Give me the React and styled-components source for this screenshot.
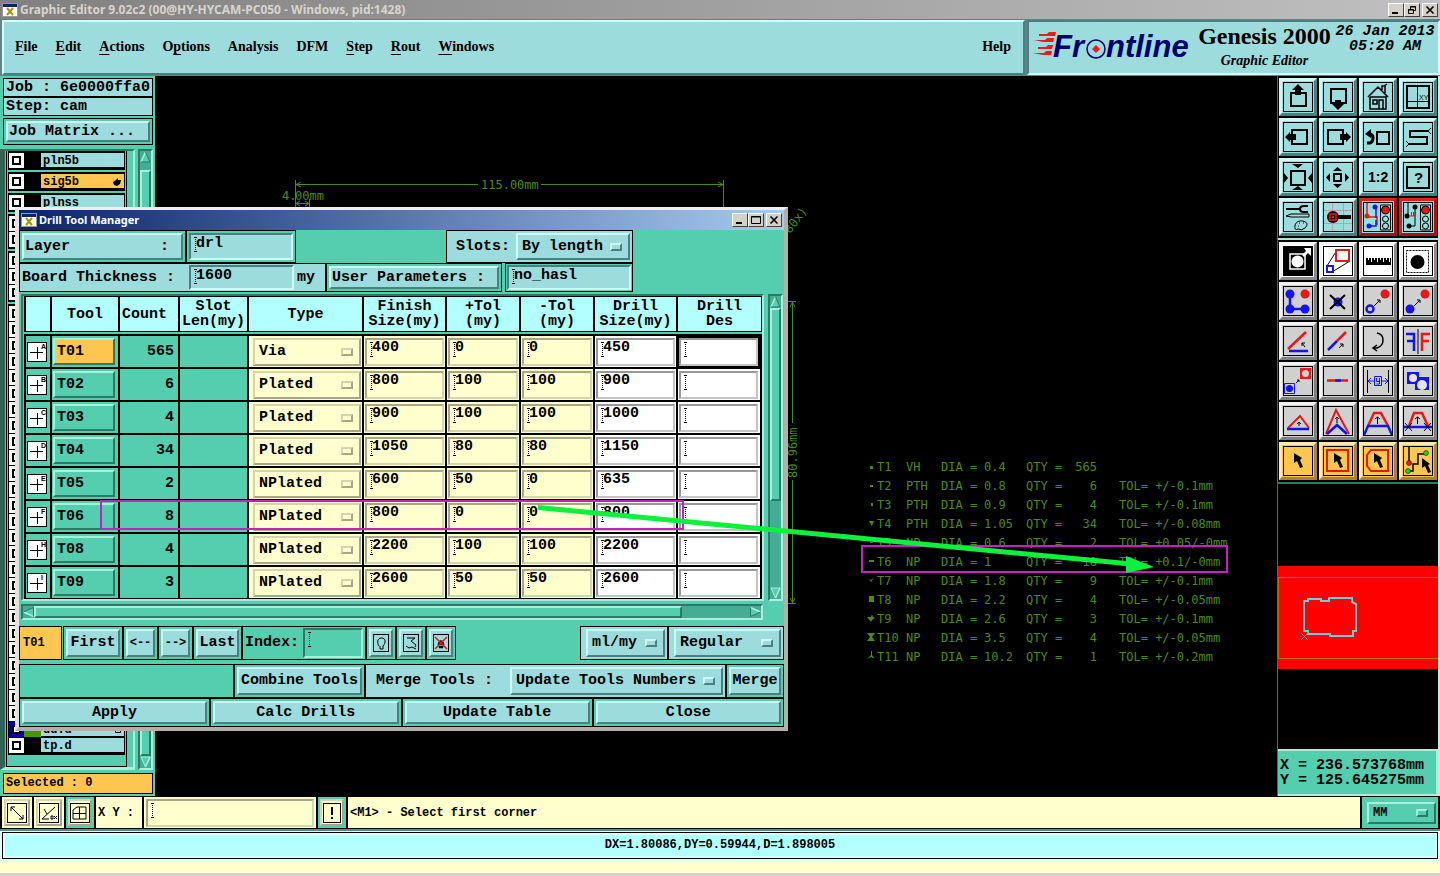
import React from "react";
import styled, { createGlobalStyle, css } from "styled-components";

const c = {
  teal: "#55ceb0",
  tealLight: "#a9f0dc",
  tealDark: "#2b7a66",
  trough: "#45ad93",
  aqua: "#9cdcdc",
  aquaLight: "#cdf8f6",
  aquaDark: "#4c8080",
  ice: "#b3ffff",
  cream: "#ffffce",
  orange: "#ffc64f",
  green: "#4a8a1c",
  magenta: "#c71fc4",
};

const mono = '"Liberation Mono", monospace';
const serif = '"Liberation Serif", serif';

const Global = createGlobalStyle`
  *, *::before, *::after { box-sizing: border-box; }
  body { margin: 0; background: ${c.cream}; color: #000; }
  button, input, select { margin: 0; border-radius: 0; color: inherit; outline: none; }
  h1, h2, p { margin: 0; }
`;

const raised = (light, dark, width = 2) => css`
  border: ${width}px solid;
  border-color: ${light} ${dark} ${dark} ${light};
`;

const Page = styled.div`
  min-height: 100vh;
  display: flex;
  flex-direction: column;
  font: bold 15px/18px ${mono};
`;

/* ---------- window title bars ---------- */

const TitleBar = styled.header`
  display: flex;
  align-items: center;
  gap: 2px;
  height: ${(p) => (p.$active ? 20 : 19)}px;
  padding: 0 2px;
  color: ${(p) => (p.$active ? "#fff" : "#d8d4cc")};
  background: ${(p) =>
    p.$active
      ? "linear-gradient(90deg, #0a246a, #a6caf0)"
      : "linear-gradient(90deg, #808080, #c0c0c0)"};
`;

const Title = styled.h1`
  flex: 1;
  font: bold ${(p) => p.$size || 12}px/16px "Noto Sans", sans-serif;
  white-space: nowrap;
`;

const WindowButtons = styled.div`
  display: flex;
`;

const WindowButton = styled.button`
  display: grid;
  place-items: center;
  width: 16px;
  height: 14px;
  padding: 0;
  background: #d4d0c8;
  color: #000;
  ${raised("#fff", "#404040", 1)}
  &:last-child { margin-left: 2px; }
`;

const AppIcon = () => (
  <svg width="16" height="14" aria-hidden="true">
    <rect x="0.5" y="0.5" width="15" height="13" fill="#fff" stroke="#9a9a9a" />
    <rect x="1" y="1" width="14" height="3" fill="#0a246a" />
    <path d="M5 5l6 7M11 5l-6 7" stroke="#a89400" strokeWidth="2" />
  </svg>
);

const WindowControls = ({ restore }) => (
  <WindowButtons>
    <WindowButton aria-label="Minimize">
      <svg width="10" height="10"><path d="M1 8h6" stroke="#000" strokeWidth="2" /></svg>
    </WindowButton>
    <WindowButton aria-label={restore ? "Restore" : "Maximize"}>
      <svg width="10" height="10" fill="none" stroke="#000">
        {restore ? (
          <path d="M3.5 4V1.5h5v4H7M3 2h6M1.5 4.5h5v4h-5zM1 5h6" />
        ) : (
          <path d="M0.5 1.5h9v7h-9zM0 2h10" />
        )}
      </svg>
    </WindowButton>
    <WindowButton aria-label="Close window">
      <svg width="10" height="10"><path d="M1.5 1.5l7 7M8.5 1.5l-7 7" stroke="#000" strokeWidth="1.6" /></svg>
    </WindowButton>
  </WindowButtons>
);

/* ---------- top menu and brand ---------- */

const TopRow = styled.div`
  display: flex;
  height: 57px;
  gap: 2px;
  padding: 1px 0 1px 2px;
  background: #5d8583;
`;

const MenuBar = styled.nav`
  flex: 1;
  display: flex;
  align-items: center;
  gap: 18px;
  padding: 0 12px 2px 11px;
  background: ${c.aqua};
  ${raised("#d8fffb", c.aquaDark)}
`;

const MenuItem = styled.button`
  padding: 0;
  border: 0;
  background: none;
  font: bold 14px/18px ${serif};
  &:last-child { margin-left: auto; }
  u { text-underline-offset: 3px; }
`;

const Brand = styled.div`
  display: flex;
  width: 413px;
  padding: 0 2px;
  background: ${c.aqua};
  ${raised(c.aquaDark, "#d8fffb")}
`;

const Product = styled.div`
  flex: 1;
  text-align: center;
  font: bold 24px/28px ${serif};
  white-space: nowrap;
  em { display: block; font-size: 14px; line-height: 22px; }
`;

const Clock = styled.time`
  width: 102px;
  padding-top: 2px;
  text-align: center;
  font-style: italic;
  font-size: 15px;
  line-height: 15px;
  white-space: nowrap;
`;

const FrontlineLogo = () => (
  <svg width="164" height="48" aria-label="Frontline" role="img">
    <g fill="#f01818">
      <path d="M8 12h8l2-2h7l-1 4H8zM3 18h11l2-2h7l-1 4H12zM7 25h8l2-2h5l-1 4H7zM2 31h11l2-2h6l-1 4H12z" />
    </g>
    <g fill="#00006e" fontFamily='"Liberation Sans", sans-serif' fontSize="31" fontWeight="bold" fontStyle="italic">
      <text x="22" y="35">Fr</text>
      <text x="75" y="35">ntline</text>
    </g>
    <circle cx="65" cy="27" r="9" fill="none" stroke="#00006e" strokeWidth="1.5" />
    <path d="M65 23l4 4-4 4-4-4z" fill="#f01818" />
  </svg>
);

/* ---------- work area ---------- */

const Work = styled.main`
  position: relative;
  display: flex;
  background: #000;
`;

const Sidebar = styled.aside`
  display: flex;
  flex-direction: column;
  width: 155px;
  padding: 2px 2px 2px 3px;
  background: ${c.teal};
  white-space: pre;
`;

const InfoLine = styled.p`
  height: 19px;
  padding: 0 2px;
  line-height: 17px;
  border: 1px solid #000;
  background: ${c.aqua};
`;

const SelectedLine = styled(InfoLine)`
  height: 21px;
  margin-top: 3px;
  font-size: 12px;
  line-height: 19px;
  background: ${c.orange};
`;

const LayerArea = styled.div`
  display: flex;
  justify-content: space-between;
  margin: 4px 0 0 -3px;
`;

const LayerFrame = styled.div`
  width: 135px;
  padding-left: 1px;
  border-top: 2px solid ${c.tealDark};
  border-bottom: 3px solid ${c.tealLight};
  border-left: 5px solid #2e6456;
  border-right: 2px solid ${c.tealLight};
`;

const LayerList = styled.div`
  width: 121px;
  padding: 0 1px 9px 1px;
  border: solid #000;
  border-width: 0 1px 1px 1px;
`;

const LayerGroup = styled.div`
  margin-bottom: 2px;
  border: solid #000;
  border-width: 2px 1px 1px 1px;
  background: #000;
`;

const LayerRow = styled.label`
  display: grid;
  grid-template-columns: 15px 17px 1fr;
  height: 16px;
  font-size: 12px;
  line-height: 14px;
`;

const LayerCheck = styled.input`
  appearance: none;
  width: 15px;
  height: 15px;
  border: 3px solid ${(p) => (p.$active ? "#0000a8" : "#fff")};
  background: #fff;
  box-shadow: inset 0 0 0 2px #000;
`;

const Swatch = styled.span`
  height: 15px;
  background: ${(p) => p.$color};
`;

const LayerName = styled.span`
  display: flex;
  justify-content: space-between;
  align-items: center;
  height: 14px;
  padding: 1px 3px 0 2px;
  background: ${(p) => (p.$active ? c.orange : c.aqua)};
`;

const Track = styled.div`
  display: flex;
  flex-direction: ${(p) => (p.$horizontal ? "row" : "column")};
  width: ${(p) => (p.$horizontal ? "742px" : "15px")};
  height: ${(p) => (p.$horizontal ? "16px" : "auto")};
  background: ${c.trough};
  ${raised(c.tealDark, c.tealLight)}
`;

const Thumb = styled.div`
  flex: ${(p) => p.$size};
  background: ${c.teal};
  ${raised(c.tealLight, c.tealDark)}
`;

const Gap = styled.div`
  flex: ${(p) => p.$size};
`;

const Arrow = ({ dir }) => {
  const turn = { up: 0, right: 90, down: 180, left: 270 }[dir];
  return (
    <svg width="11" height="12" viewBox="0 0 11 12" style={{ flex: "none" }} aria-hidden="true">
      <g transform={`rotate(${turn} 5.5 6)`}>
        <path d="M5.5 1L1 11H10z" fill={c.teal} />
        <path d="M5.5 1L1 11" stroke={c.tealLight} strokeWidth="1.5" />
        <path d="M5.5 1L10 11H1" stroke={dir === "down" ? c.tealLight : c.tealDark} fill="none" />
      </g>
    </svg>
  );
};

/* ---------- generic Motif controls ---------- */

const Box = styled.div`
  display: flex;
  align-items: stretch;
  flex: ${(p) => (p.$grow ? "1 1 0" : "none")};
  width: ${(p) => (p.$w ? `${p.$w}px` : "auto")};
  margin-left: ${(p) => p.$ml || 0}px;
  padding: ${(p) => p.$pad ?? 2}px;
  border: 1px solid #000;
  background: ${(p) => p.$bg || c.teal};
`;

const Button = styled.button`
  flex: 1;
  display: flex;
  align-items: center;
  justify-content: ${(p) => p.$justify || "center"};
  padding: 0 ${(p) => p.$px ?? 0}px;
  background: ${c.aqua};
  ${raised(c.aquaLight, c.aquaDark)}
  font: bold ${(p) => p.$size || 15}px/18px ${mono};
  white-space: pre;
`;

const dots = css`
  background-image: repeating-linear-gradient(#000 0 1px, transparent 1px 2px),
    linear-gradient(#000, #000), linear-gradient(#000, #000);
  background-size: 1px 15px, 3px 1px, 3px 1px;
  background-position: 4px 2px, 3px 2px, 3px 16px;
  background-repeat: no-repeat;
`;

const Field = styled.input`
  display: block;
  flex: ${(p) => (p.$w ? "none" : 1)};
  width: ${(p) => (p.$w ? `${p.$w}px` : "100%")};
  min-width: 0;
  padding: 0 0 ${(p) => p.$pb ?? 8}px 5px;
  background-color: ${(p) => p.$bg || c.aqua};
  ${(p) => raised(p.$dark || c.aquaDark, p.$light || c.aquaLight)}
  font: bold 15px/16px ${mono};
  ${dots}
`;

const SelectWrap = styled.span`
  position: relative;
  display: flex;
  flex: ${(p) => (p.$w ? "none" : 1)};
  width: ${(p) => (p.$w ? `${p.$w}px` : "auto")};
  margin-left: ${(p) => p.$ml || 0}px;
  &::after {
    content: "";
    position: absolute;
    right: 8px;
    top: 50%;
    width: 12px;
    height: 8px;
    margin-top: -4px;
    pointer-events: none;
    ${(p) => raised(p.$light || c.aquaLight, p.$dark || c.aquaDark)}
  }
`;

const SelectBox = styled.select`
  appearance: none;
  width: 100%;
  padding: 0 0 0 4px;
  background: ${(p) => p.$bg || c.aqua};
  ${(p) => raised(p.$light || c.aquaLight, p.$dark || c.aquaDark)}
  font: bold ${(p) => p.$size || 15}px/18px ${mono};
`;

const Select = ({ label, value, w, ml, light, dark, bg, size, id }) => (
  <SelectWrap $w={w} $ml={ml} $light={light} $dark={dark}>
    <SelectBox id={id} aria-label={label} defaultValue={value} $light={light} $dark={dark} $bg={bg} $size={size}>
      <option>{value}</option>
    </SelectBox>
  </SelectWrap>
);

const Label = styled.label`
  display: flex;
  align-items: center;
  width: ${(p) => (p.$w ? `${p.$w}px` : "auto")};
  padding-left: ${(p) => p.$pl ?? 1}px;
  white-space: pre;
`;

/* ---------- drill dialog ---------- */

const Dialog = styled.section`
  position: absolute;
  left: 15px;
  top: 131px;
  width: 773px;
  border: solid;
  border-width: 3px 4px 4px 4px;
  border-color: #f0eee8 #b4b0a8 #b4b0a8 #e4e2dc;
  background: ${c.teal};
`;

const Line = styled.div`
  display: flex;
  height: ${(p) => p.$h}px;
  margin-top: ${(p) => p.$mt || 0}px;
`;

const TableLine = styled.div`
  display: flex;
  gap: 4px;
  margin: 2px 0 3px 2px;
`;

const TableFrame = styled.div`
  flex: none;
  padding-left: 1px;
  ${raised(c.tealDark, c.tealLight)}
`;

const Table = styled.table`
  width: 738px;
  table-layout: fixed;
  border-spacing: 0;
  tbody::before { content: ""; display: block; height: 2px; }
`;

const Th = styled.th`
  height: 36px;
  padding: 0;
  border: solid #000;
  border-width: 1px 0 1px 2px;
  background: ${c.ice};
  font: bold 15px/15px ${mono};
  white-space: pre;
  &:last-child { border-right-width: 1px; }
`;

const Td = styled.td`
  height: 33px;
  padding: ${(p) => p.$pad || "1px"};
  border: solid #000;
  border-width: 2px 0 0 2px;
  background: ${(p) => p.$bg || c.teal};
  text-align: right;
  tr:last-child > & { height: 34px; border-bottom-width: 1px; }
  &:last-child { border-right-width: 2px; box-shadow: ${(p) => (p.$focus ? "inset 0 0 0 2px #000" : "none")}; }
  & > ${Field} { height: 28px; }
  & > ${SelectWrap} { height: 28px; }
`;

const ToolButton = styled.button`
  display: block;
  width: 100%;
  height: 27px;
  padding: 0 0 0 2px;
  text-align: left;
  background: ${(p) => (p.$current ? c.orange : c.teal)};
  ${raised(c.tealLight, c.tealDark)}
  font: bold 15px/18px ${mono};
`;

const CurrentTool = styled.div`
  display: flex;
  align-items: center;
  width: 43px;
  padding-left: 3px;
  border: 1px solid #000;
  background: ${c.orange};
  font-size: 12px;
`;

const Spacer = styled.div`
  flex: 1;
  border: ${(p) => (p.$framed ? "1px solid #000" : 0)};
`;

const MarkSvg = styled.svg`
  display: block;
`;

const ToolMark = ({ letter }) => (
  <MarkSvg width="20" height="20" aria-hidden="true">
    <rect x="0.5" y="0.5" width="19" height="19" fill="#fff" stroke="#000" />
    <path d="M3 10.5H16M10.5 5V17" stroke="#000" />
    <text x="14" y="7" fontSize="7" fontWeight="bold" fontFamily="Liberation Sans, sans-serif">{letter}</text>
  </MarkSvg>
);

const columns = [
  ["", 26], ["Tool", 68], ["Count ", 60], ["Slot\nLen(my)", 69], ["Type", 115],
  ["Finish\nSize(my)", 83], ["+Tol\n(my)", 74], ["-Tol\n(my)", 74], ["Drill\nSize(my)", 83], ["Drill\nDes", 86],
];

const tools = [
  ["A", "T01", 565, "Via", 400, 0, 0, 450],
  ["B", "T02", 6, "Plated", 800, 100, 100, 900],
  ["C", "T03", 4, "Plated", 900, 100, 100, 1000],
  ["D", "T04", 34, "Plated", 1050, 80, 80, 1150],
  ["E", "T05", 2, "NPlated", 600, 50, 0, 635],
  ["F", "T06", 8, "NPlated", 800, 0, 0, 800],
  ["H", "T08", 4, "NPlated", 2200, 100, 100, 2200],
  ["I", "T09", 3, "NPlated", 2600, 50, 50, 2600],
];

const creamBevel = { light: "#d6d4ae", dark: "#a8a688" };
const whiteBevel = { light: "#c4c4c4", dark: "#989898" };

const SmallIcon = styled.svg`
  width: 16px;
  height: 18px;
  border: 1px solid #000;
  fill: none;
  stroke: #000;
`;

const DrillDialog = () => (
  <Dialog aria-label="Drill Tool Manager">
    <TitleBar $active>
      <AppIcon />
      <Title as="h2" $size={11}>Drill Tool Manager</Title>
      <WindowControls />
    </TitleBar>

    <Line $h={33}>
      <Box $w={167}><Button $justify="flex-start" $px={1}>{"Layer          :"}</Button></Box>
      <Box $w={110}><Field aria-label="Layer" defaultValue="drl" $pb={6} /></Box>
      <Box $w={187} $ml={150} $bg={c.aqua}>
        <Label htmlFor="slots" $pl={7}>Slots:</Label>
        <Select id="slots" value="By length" ml={6} />
      </Box>
    </Line>
    <Line $h={29}>
      <Box $w={307} $bg={c.aqua} $pad={1}>
        <Label htmlFor="thickness" $w={168}>Board Thickness :</Label>
        <Field id="thickness" defaultValue="1600" $w={105} $pb={4} />
        <Label as="span" $pl={3}>my</Label>
      </Box>
      <Box $w={176}><Button $justify="flex-start" $px={1}>User Parameters :</Button></Box>
      <Box $w={128} $ml={3} $pad={1}><Field aria-label="User parameters" defaultValue="no_hasl" $pb={4} /></Box>
    </Line>

    <TableLine>
      <TableFrame>
        <Table>
          <colgroup>{columns.map(([name, w]) => <col key={name} width={w} />)}</colgroup>
          <thead>
            <tr>{columns.map(([name]) => <Th key={name} scope="col">{name}</Th>)}</tr>
          </thead>
          <tbody>
            {tools.map(([letter, name, count, type, finish, plus, minus, drill], i) => (
              <tr key={name}>
                <Td><ToolMark letter={letter} /></Td>
                <Td $pad="1px 3px 1px 1px"><ToolButton $current={i === 0}>{name}</ToolButton></Td>
                <Td $pad="1px 4px 1px 1px">{count}</Td>
                <Td />
                <Td $bg={c.cream} $pad="1px 1px 1px 4px">
                  <Select label={`${name} type`} value={type} bg={c.cream} light={creamBevel.light} dark={creamBevel.dark} />
                </Td>
                {[["finish size", finish], ["plus tolerance", plus], ["minus tolerance", minus]].map(([what, v]) => (
                  <Td key={what} $bg={c.cream}>
                    <Field aria-label={`${name} ${what}`} defaultValue={v} $bg={c.cream} $dark={creamBevel.dark} $light={creamBevel.light} />
                  </Td>
                ))}
                <Td $bg="#fff">
                  <Field aria-label={`${name} drill size`} defaultValue={drill} $bg="#fff" $dark={whiteBevel.dark} $light={whiteBevel.light} />
                </Td>
                <Td $bg="#fff" $focus={i === 0} $pad="1px 2px 1px 1px">
                  <Field aria-label={`${name} description`} $bg="#fff" $dark={whiteBevel.dark} $light={whiteBevel.light} />
                </Td>
              </tr>
            ))}
          </tbody>
        </Table>
      </TableFrame>
      <Track aria-hidden="true">
        <Arrow dir="up" /><Thumb $size={188} /><Gap $size={86} /><Arrow dir="down" />
      </Track>
    </TableLine>
    <TableLine>
      <Track $horizontal aria-hidden="true">
        <Arrow dir="left" /><Thumb $size={646} /><Gap $size={68} /><Arrow dir="right" />
      </Track>
    </TableLine>

    <Line $h={34} $mt={6}>
      <CurrentTool>T01</CurrentTool>
      <Box $w={60} $ml={1}><Button>First</Button></Box>
      <Box $w={35}><Button $size={12}>{"<--"}</Button></Box>
      <Box $w={35}><Button $size={12}>{"-->"}</Button></Box>
      <Box $w={49}><Button>Last</Button></Box>
      <Box $w={124} $pad={1}>
        <Label htmlFor="index" $w={59}>Index:</Label>
        <Field id="index" $bg={c.teal} $dark={c.tealDark} $light={c.tealLight} $w={60} />
      </Box>
      <Box $w={30}>
        <Button aria-label="Highlight">
          <SmallIcon><path d="M5 11C3 8 3 3 7.500 3S12 8 9 11V14H6V11" /></SmallIcon>
        </Button>
      </Box>
      <Box $w={30}>
        <Button aria-label="Show path">
          <SmallIcon><path d="M3 3H11L7 6L12 10L11 12M2 11L5 13L8 12L12 14" /></SmallIcon>
        </Button>
      </Box>
      <Box $w={30}>
        <Button aria-label="Clear highlight">
          <SmallIcon>
            <path d="M4 10C4 4 10 4 10 10M5 11h4v2h-4z" fill="#111" strokeWidth=".5" />
            <path d="M1 2L13 14M13 2L1 14" stroke="#e01818" strokeWidth="1.5" />
          </SmallIcon>
        </Button>
      </Box>
      <Spacer />
      <Box $w={88} $bg={c.aqua}><Select label="Units" value="ml/my" ml={3} /></Box>
      <Box $w={116} $bg={c.aqua}><Select label="Mode" value="Regular" ml={3} /></Box>
    </Line>
    <Line $h={34} $mt={4}>
      <Spacer $framed />
      <Box $w={131}><Button>Combine Tools</Button></Box>
      <Box $w={361} $bg={c.aqua}>
        <Label htmlFor="merge" $w={142} $pl={8}>Merge Tools :</Label>
        <Select id="merge" value="Update Tools Numbers" />
      </Box>
      <Box $w={58}><Button>Merge</Button></Box>
    </Line>
    <Line $h={29}>
      {["Apply", "Calc Drills", "Update Table", "Close"].map((t) => (
        <Box key={t} $grow><Button>{t}</Button></Box>
      ))}
    </Line>
  </Dialog>
);

/* ---------- CAD canvas ---------- */

const Canvas = styled.svg`
  flex: 1;
  min-width: 0;
  background: #000;
  font: normal 12px "DejaVu Sans Mono", monospace;
`;

const holes = [
  ["T1", "VH", "0.4", 565, "", "M870 466h3v3h-3z"],
  ["T2", "PTH", "0.8", 6, "+/-0.1mm", "M870 485h3v2h-3z"],
  ["T3", "PTH", "0.9", 4, "+/-0.1mm", "M871 503h2v3h-2z"],
  ["T4", "PTH", "1.05", 34, "+/-0.08mm", "M869 521h5l-2 5z"],
  ["T5", "NP", "0.6", 2, "+0.05/-0mm", "M870 542h3v1h-3z"],
  ["T6", "NP", "1", 18, "+0.1/-0mm", "M869 560h5v2h-5z"],
  ["T7", "NP", "1.8", 9, "+/-0.1mm", "M869 579l2 1 3-2-3 4z"],
  ["T8", "NP", "2.2", 4, "+/-0.05mm", "M869 596h5v6h-5z"],
  ["T9", "NP", "2.6", 3, "+/-0.1mm", "M867 617h4l1-3 1 3 2 1-3 2-1 2z"],
  ["T10", "NP", "3.5", 4, "+/-0.05mm", "M867 633h8l-3 4 3 4h-8l3-4z"],
  ["T11", "NP", "10.2", 1, "+/-0.2mm", "M871 651h1v4l3 4-4-2-4 2 4-4z"],
];

const CadCanvas = () => (
  <Canvas aria-label="Drawing">
    <g transform="translate(-155 -76)" fill={c.green}>
      <g stroke={c.green} fill="none">
        <path d="M295.500 180V208M723.500 180V208M296 184.500H478M541 184.500H723M296 203.500H309M309.500 199V208" />
        <path d="M301 182l-5 2.500 5 2.500M718 182l5 2.500-5 2.500M300 201l-4 2.500 4 2.500M305 201l4 2.500-4 2.500" />
        <path d="M792.500 302V423M792.500 480V603M788 301.500H796M788 603.500H796M790 307l2.500-5 2.500 5M790 598l2.500 5 2.500-5" />
      </g>
      <text x="481" y="189">115.00mm</text>
      <text x="282" y="200">4.</text>
      <text x="295" y="200">00mm</text>
      <text transform="translate(797 478) rotate(-90)">80.96mm</text>
      <text transform="translate(790 234) rotate(-52)">80x)</text>
      {holes.map(([tool, type, dia, qty, tol, mark], i) => {
        const y = 471 + i * 19;
        return (
          <g key={tool}>
            <path d={mark} />
            <text x="877" y={y}>{tool}</text>
            <text x="906" y={y}>{type}</text>
            <text x="941" y={y}>DIA =</text>
            <text x="984" y={y}>{dia}</text>
            <text x="1026" y={y}>QTY =</text>
            <text x="1097" y={y} textAnchor="end">{qty}</text>
            {tol && <text x="1119" y={y}>TOL= {tol}</text>}
          </g>
        );
      })}
    </g>
  </Canvas>
);

const Annotations = styled.svg`
  position: absolute;
  inset: 0;
  width: 100%;
  height: 100%;
  pointer-events: none;
`;

/* ---------- right tool palette ---------- */

const Palette = styled.aside`
  display: flex;
  flex-direction: column;
  width: 163px;
  border-left: 1px solid ${c.tealDark};
  border-right: 2px solid #bfeedd;
  background: #000;
`;

const IconGrid = styled.div`
  display: grid;
  grid-template-columns: repeat(4, 38px);
  gap: 2px;
  padding: 2px 1px;
  border-bottom: 2px solid ${(p) => (p.$last ? c.tealDark : "#a9e8d8")};
`;

const tones = {
  aqua: [c.aqua, c.aquaLight, c.aquaDark],
  white: ["#fff", "#f4f4f4", "#8a8a8a"],
  gray: ["#d0d0d0", "#f2f2f2", "#808080"],
  orange: [c.orange, "#ffe9ae", "#a8823a"],
  red: [c.aqua, "#e02020", "#a81212"],
};

const IconButton = styled.button`
  display: grid;
  place-items: center;
  height: 38px;
  padding: 0;
  background: ${(p) => tones[p.$tone][0]};
  ${(p) => raised(tones[p.$tone][1], tones[p.$tone][2], 3)}
  svg { display: block; outline: 1px solid #000; outline-offset: -1px; }
`;

const K = { fill: "none", stroke: "#000", strokeWidth: 2 };
const T = { fill: "none", stroke: "#000", strokeWidth: 1 };
const R = { fill: "none", stroke: "#e81818", strokeWidth: 2.5 };
const B = { fill: "none", stroke: "#1414f0", strokeWidth: 2.5 };
const cursor = "M11 7l8 5-2 2 3 7-3 1-3-7-3 2z";

const editorIcons = [
  ["Pan up", "aqua", <><path {...K} d="M8 11h15v13H8z" /><path d="M15 2l6 6h-3v5h-6V8H9z" /></>],
  ["Pan down", "aqua", <><path {...K} d="M8 7h15v14H8z" /><path d="M15 28l-6-6h3v-4h6v4h3z" /></>],
  ["Home", "aqua", <><path {...T} strokeWidth="1.5" d="M5 15L15 5l10 10M7 15v12h16V15H7M19 8V4h3v7M21 4l3-2M10 18h4v4h-4zM16 27v-9h4v9" /></>],
  ["Window XY", "aqua", <><path {...K} d="M4 4h22v22H4z" /><path {...T} d="M14.500 4v22M4 19.500h22" /><text x="16" y="18" fontSize="7" fontFamily="Liberation Sans, sans-serif">XY</text></>],
  ["Pan left", "aqua", <><path {...K} d="M9 8h15v14H9z" /><path d="M2 15l5-5v2h6v6H7v2z" /></>],
  ["Pan right", "aqua", <><path {...K} d="M5 8h15v14H5z" /><path d="M28 15l-5-5v2h-6v6h6v2z" /></>],
  ["Previous view", "aqua", <><path {...K} d="M14 10h12v12H14z" /><path {...K} strokeWidth="3" d="M4 21h3q3-1 3-5t-4-4" /><path d="M2 12l6-5v9z" /></>],
  ["Serpentine", "aqua", <><path {...K} d="M25 9H7v6h17v7H6" /><path {...T} d="M25 9l3-3M25 9l3 3M6 22l-3-3M6 22l-3 3" /></>],
  ["Zoom in", "aqua", <><path {...K} d="M8 9h14v14H8z" /><path d="M9 2h11l-5 4zM9 28h11l-5-4zM1 11v10l4-5zM29 11v10l-4-5z" /></>],
  ["Zoom out", "aqua", <><path {...K} d="M11 12h7v7h-7z" /><path d="M10 9h9l-4.500-4zM10 22h9l-4.500 4zM7 11v9l-4-4.500zM22 11v9l4-4.500z" /></>],
  ["Scale 1:2", "aqua", <text x="5" y="20" fontSize="14" fontWeight="bold" fontFamily="Liberation Sans, sans-serif">1:2</text>],
  ["Help", "aqua", <><path {...K} d="M4 5h22v21H4z" /><text x="11" y="21" fontSize="15" fontWeight="bold" fontFamily="Liberation Sans, sans-serif">?</text></>],
  ["Settings", "aqua", <><path d="M3 6h14v2H3z" /><path {...K} d="M25 4h-4q-4 0-4 3t4 3h4" /><path {...T} d="M3 14l5-2h18v3H8zM12 23q2-5 8-4 7 2 2 7-3 3-7 1-4 2-3-4M16 21h1M20 21h1M15 24h1" /></>],
  ["Snap to grid", "aqua", <><path stroke="#b5a3a3" fill="none" d="M9.500 1v28M20.500 1v28M1 8.500h28M1 21.500h28" /><circle cx="10" cy="15" r="6" /><path d="M15 13h13v4H15z" /><path fill="none" stroke="#e81818" strokeWidth="1.500" d="M7 12h6v6H7z" /><path fill="#e81818" d="M9 14h2v2H9z" /></>],
  ["Highlight nets", "red", <><path fill="none" stroke="#e81818" strokeWidth="1.500" d="M4 1v14h10v8" /><path fill="none" stroke="#1414f0" strokeWidth="1.500" d="M13 5v11M13 18v6H6" /><circle cx="4" cy="14" r="2.500" fill="#e81818" /><g fill="#1414f0"><circle cx="12" cy="5" r="2.500" /><circle cx="6" cy="24" r="2.500" /></g><path {...T} d="M17.500 3h10v25h-10z" /><circle cx="22.500" cy="8" r="4" fill="#e81818" stroke="#000" /><circle {...T} cx="22.500" cy="17" r="3" /><circle {...T} cx="22.500" cy="24" r="3" /></>],
  ["Highlight shorts", "red", <><path {...T} d="M5 1v13M12 5v19H7" /><circle cx="4" cy="14" r="2.500" /><circle cx="12" cy="5" r="2.500" /><circle cx="6" cy="24" r="2.500" /><path fill="none" stroke="#e81818" d="M7 14h6M8.500 10v4M10.500 10v4M12.500 10v4" /><path {...T} d="M17.500 3h10v25h-10z" /><circle cx="22.500" cy="8" r="4" fill="#e81818" stroke="#000" /><circle {...T} cx="22.500" cy="17" r="3" /><circle {...T} cx="22.500" cy="24" r="3" /></>],
];

const drawIcons = [
  ["Add feature", "white", <><path d="M1 1h28v28H1z" /><path fill="none" stroke="#fff" strokeWidth="1.500" d="M7 8h15v15H7z" /><circle cx="14.500" cy="15.500" r="6" fill="#fff" /><path fill="#fff" d="M19 9l4-4-2-3h7v8l-3-3-4 4z" /></>],
  ["Resize window", "white", <><path {...T} d="M4 20L14 4M9 26l18-11" /><path {...R} strokeWidth="2" d="M13 4h13v11H13z" /><path {...B} strokeWidth="2" d="M4 20h6v6H4z" /></>],
  ["Measure", "white", <><path d="M3 12h25v7H3z" /><path stroke="#fff" fill="none" d="M5.500 10v4M8.500 10v6M11.500 10v4M14.500 10v6M17.500 10v4M20.500 10v6M23.500 10v4M26.500 10v6" /></>],
  ["Select area", "white", <><path {...T} strokeDasharray="2 1" d="M3.500 4.500h22v22h-22z" /><circle cx="14.500" cy="16" r="7" /></>],
  ["Copy group", "gray", <><path {...B} d="M7 7v16h15" /><g fill="#1414f0"><circle cx="7" cy="8" r="4.500" /><circle cx="7" cy="23" r="4.500" /><circle cx="22" cy="23" r="4.500" /></g><circle cx="22" cy="8" r="4.500" fill="#e81818" /></>],
  ["Delete", "gray", <><circle cx="15" cy="16" r="4.500" fill="#1414f0" /><path {...K} d="M7 9l15 14M22 9L7 23" /></>],
  ["Move", "gray", <><circle {...B} cx="7" cy="23" r="3.500" /><circle cx="22" cy="8" r="4.500" fill="#e81818" /><path {...T} d="M11 20l6-6M14 14h3v3" /></>],
  ["Copy", "gray", <><circle cx="7" cy="23" r="4.500" fill="#1414f0" /><circle cx="22" cy="8" r="4.500" fill="#e81818" /><path {...T} d="M11 20l6-6M14 14h3v3" /></>],
  ["Change angle", "gray", <><path {...R} d="M5 23L23 6" /><path {...B} d="M6 25h19" /><path {...T} d="M22 21l-3-4M19 20v-3h3" /></>],
  ["Stretch line", "gray", <><path {...R} d="M14 15l9-9" /><path {...B} d="M5 24l9-9" /><path {...T} d="M16 22l4-4M17 18h3v3" /></>],
  ["Rotate", "gray", <><path {...K} strokeWidth="1.500" d="M14 7q6 1 6 7t-6 8h-3M14 19l-4 3 4 3" /></>],
  ["Mirror", "gray", <><path {...B} d="M3 8h8v17M4 15h7" /><path {...T} d="M15 3v25" /><path {...R} d="M27 8h-8v17M26 15h-7" /></>],
  ["Change symbol", "gray", <><path fill="none" stroke="#1414f0" d="M1.500 17.500h10v10h-10z" /><circle cx="6.500" cy="22.500" r="3.500" fill="#1414f0" /><path d="M17 2h11v11H17z" fill="#e81818" /><circle cx="22.500" cy="7.500" r="3.500" fill="#d0d0d0" /><path {...T} d="M13 17l3-3M14 14h2v2" /></>],
  ["Break line", "gray", <><path {...R} d="M4 14.500h21" /><path {...B} d="M12 14.500h6" /></>],
  ["Set spacing", "gray", <><path {...T} d="M4.500 4v23M25.500 4v23" /><g fill="none" stroke="#1414f0"><path d="M11.500 10.500h7v9h-7zM6 15h5M19 15h5M8 12l-3 3 3 3M22 12l3 3-3 3M13.500 12v3.500h3M16.500 12v6h-3" /></g></>],
  ["Boolean", "gray", <><path d="M4 6h12v5h10v13H12v-6H4z" fill="#1414f0" /><circle cx="10" cy="12" r="4" fill="#e4e4e4" /><circle cx="19" cy="19" r="5" fill="#e4e4e4" /></>],
  ["Move edge", "gray", <><path {...R} strokeWidth="2" d="M5 22L17 10l9 12" /><path {...B} d="M4 23h22" /><path {...T} d="M16 20v-4M14 18l2-2 2 2" /></>],
  ["Move corner", "gray", <><path {...R} strokeWidth="2" d="M3 28L13 4l13 24" /><path {...B} d="M4 28l10-9 10 9" /><path {...T} d="M14 17v-6M12 13l2-2 2 2" /></>],
  ["Move trace", "gray", <><path {...R} d="M5 20L11 7h7l7 13" /><path {...B} d="M1 29l4-9h20l4 9" /><path {...T} d="M14.500 18v-7M12 13l2.500-2 2.500 2" /></>],
  ["Move segment", "gray", <><path {...R} d="M6 20L11 7h8l6 13" /><path {...B} d="M1 21h28" /><path {...T} d="M14.500 18v-7M12 13l2.500-2 2.500 2M2 17l7 8M9 17l-7 8M21 17l7 8M28 17l-7 8" /></>],
  ["Select", "orange", <path d={cursor} />],
  ["Select in box", "orange", <><path {...R} strokeWidth="2" d="M4 4h21v21H4z" /><path d={cursor} /></>],
  ["Select in polygon", "orange", <><path {...R} strokeWidth="2" d="M8 4h17v21H8l-4-5V9z" /><path d={cursor} /></>],
  ["Select net", "orange", <><path {...T} strokeWidth="1.500" d="M6 1v16M23 8h-8v10h-5v7H5" /><circle cx="6" cy="17" r="2.500" fill="#e81818" stroke="#000" strokeWidth=".5" /><circle cx="23" cy="7" r="2.500" fill="#20d020" stroke="#000" strokeWidth=".5" /><circle cx="5" cy="25" r="2.500" fill="#20d020" stroke="#000" strokeWidth=".5" /><path d="M19 12l8 6-2 1 3 7-3 1-3-7-3 2z" /></>],
];

const IconPanel = ({ icons, last }) => (
  <IconGrid $last={last}>
    {icons.map(([name, tone, art]) => (
      <IconButton key={name} $tone={tone} aria-label={name}>
        <svg width="30" height="30" viewBox="0 0 30 30">{art}</svg>
      </IconButton>
    ))}
  </IconGrid>
);

const Overview = styled.svg`
  flex: 1;
  width: 100%;
  min-height: 200px;
`;

const Coordinates = styled.output`
  display: block;
  padding: 7px 2px 6px;
  background: ${c.teal};
  ${raised(c.tealLight, c.tealLight)}
  border-left: 0;
  line-height: 15px;
  white-space: pre;
`;

/* ---------- bottom rows ---------- */

const CommandRow = styled.div`
  display: flex;
  gap: 2px;
  height: 33px;
  padding: 1px 2px;
  background: #000;
  font-size: 12px;
`;

const CommandCell = styled.div`
  display: flex;
  align-items: center;
  justify-content: ${(p) => (p.$text ? "flex-start" : "center")};
  flex: ${(p) => (p.$grow ? 1 : "none")};
  width: ${(p) => (p.$w ? `${p.$w}px` : "auto")};
  padding: ${(p) => (p.$text ? "0 2px" : "2px")};
  background: ${(p) => (p.$teal ? c.teal : c.cream)};
`;

const CommandButton = styled.button`
  display: grid;
  place-items: center;
  width: 26px;
  height: 27px;
  padding: 0;
  background: ${c.cream};
  ${raised("#d6d4ae", "#a8a688")}
  svg { outline: 1px solid #000; display: block; fill: none; stroke: #000; }
`;

const StatusFrame = styled.div`
  padding: 1px 2px 2px;
  border-top: 2px solid #5a8a88;
  background: #e0fdfb;
`;

const Status = styled.p`
  height: 27px;
  border: 1px solid #000;
  outline: 2px solid #d8fffb;
  outline-offset: -3px;
  background: ${c.ice};
  text-align: center;
  font-size: 12px;
  line-height: 25px;
`;

const Foot = styled.footer`
  flex: 1;
  min-height: 14px;
  border-bottom: 3px solid #d4d0c8;
  background: ${c.cream};
`;

const menus = [["", "F", "ile"], ["", "E", "dit"], ["", "A", "ctions"], ["O", "p", "tions"], ["Analysis", "", ""], ["DFM", "", ""], ["", "S", "tep"], ["", "R", "out"], ["", "W", "indows"], ["Help", "", ""]];

const blank = (n) => Array.from({ length: n }, () => ({ name: "" }));
const layerGroups = [
  [{ name: "pln5b" }],
  [{ name: "sig5b", active: true }],
  [{ name: "plnss" }],
  blank(2),
  blank(3),
  [...blank(26), { name: "dd.d", color: "#3f9a00", shown: true }, { name: "tp.d" }],
];

const Pointer = () => (
  <svg width="8" height="8" aria-hidden="true"><path d="M0 4l3-2 2-2 0 2 3 0-1 4-3 2-3-1z" /></svg>
);

export default function App() {
  return (
    <Page>
      <Global />
      <TitleBar>
        <AppIcon />
        <Title>Graphic Editor 9.02c2 (00@HY-HYCAM-PC050 - Windows, pid:1428)</Title>
        <WindowControls restore />
      </TitleBar>

      <TopRow>
        <MenuBar>
          {menus.map(([before, key, after]) => (
            <MenuItem key={before + key + after}>{before}{key && <u>{key}</u>}{after}</MenuItem>
          ))}
        </MenuBar>
        <Brand>
          <FrontlineLogo />
          <Product>Genesis 2000<em>Graphic Editor</em></Product>
          <Clock dateTime="2013-01-26T05:20">26 Jan 2013<br />05:20 AM</Clock>
        </Brand>
      </TopRow>

      <Work>
        <Sidebar>
          <InfoLine>Job : 6e0000ffa0</InfoLine>
          <InfoLine>Step: cam</InfoLine>
          <Line $h={27} $mt={2}>
            <Box $grow><Button $justify="flex-start" $px={1}>Job Matrix ...</Button></Box>
          </Line>
          <LayerArea>
            <LayerFrame>
              <LayerList>
                {layerGroups.map((group, g) => (
                  <LayerGroup key={g}>
                    {group.map((layer, i) => (
                      <LayerRow key={i}>
                        <LayerCheck type="checkbox" aria-label={layer.name || "layer"} $active={layer.shown} />
                        <Swatch $color={layer.color || "#000"} />
                        <LayerName $active={layer.active}>
                          {layer.name}
                          {layer.active && <Pointer />}
                          {layer.shown && (
                            <svg width="6" height="7" aria-hidden="true"><path d="M.5.500h5v6h-5zM0 3.500h6" fill="none" stroke="#000" /></svg>
                          )}
                        </LayerName>
                      </LayerRow>
                    ))}
                  </LayerGroup>
                ))}
              </LayerList>
            </LayerFrame>
            <Track aria-hidden="true">
              <Arrow dir="up" /><Gap $size={7} /><Thumb $size={583} /><Arrow dir="down" />
            </Track>
          </LayerArea>
          <SelectedLine>Selected : 0</SelectedLine>
        </Sidebar>

        <CadCanvas />

        <Palette>
          <IconPanel icons={editorIcons} />
          <IconPanel icons={drawIcons} last />
          <Overview aria-label="Overview">
            <rect y="82" width="100%" height="103" fill="#f00" />
            <rect x="0.5" y="93.500" width="163" height="81" fill="none" stroke="#c06a00" />
            <path d="M26 117h4v-2h13v2h8v-3h23v4l4 2v27h-3v5H52v-2H30v-3h-4z" fill="none" stroke="#6fd0d8" strokeWidth="2" />
            <path d="M23 149l7 7M30 149l-7 7" stroke="#c8a0a0" />
          </Overview>
          <Coordinates>{"X = 236.573768mm\nY = 125.645275mm"}</Coordinates>
        </Palette>

        <DrillDialog />

        <Annotations aria-hidden="true">
          <g transform="translate(0 -76)">
            <g fill="none" stroke={c.magenta} strokeWidth="2">
              <rect x="101" y="501" width="582" height="28" />
              <rect x="862" y="546" width="365" height="26" />
            </g>
            <path d="M538 505L1126 561V556L1154 567L1126 573V566L538 510Z" fill="#0cf23c" />
          </g>
        </Annotations>
      </Work>

      <CommandRow>
        <CommandCell $w={30}>
          <CommandButton aria-label="Diagonal">
            <svg width="18" height="18"><path d="M3 3l12 12M3 7V3h4M15 11v4h-4" /></svg>
          </CommandButton>
        </CommandCell>
        <CommandCell $w={30}>
          <CommandButton aria-label="Angle">
            <svg width="18" height="18"><path d="M2 15L15 3M2 15h7M4 5l3 5M11 12h2v3h-2zM14 12l3 3M17 12l-3 3" /></svg>
          </CommandButton>
        </CommandCell>
        <CommandCell $w={28} $teal>
          <CommandButton aria-label="Grid">
            <svg width="18" height="18"><path d="M2 15V6l4-3h9v12zM8.500 3v12M2 9.500h13" /></svg>
          </CommandButton>
        </CommandCell>
        <CommandCell as="label" htmlFor="xy" $w={46} $text>X Y :</CommandCell>
        <CommandCell $w={172}><Field id="xy" $bg={c.cream} $dark={creamBevel.dark} $light={creamBevel.light} /></CommandCell>
        <CommandCell $w={28} $teal>
          <CommandButton aria-label="Message">
            <svg width="16" height="18"><path d="M8 3v8M8 13v2" strokeWidth="2" /></svg>
          </CommandButton>
        </CommandCell>
        <CommandCell $grow $text>{"<M1> - Select first corner"}</CommandCell>
        <CommandCell $w={76} $teal>
          <Select label="Display units" value="MM" ml={3} bg={c.teal} light={c.tealLight} dark={c.tealDark} size={12} />
        </CommandCell>
      </CommandRow>
      <StatusFrame>
        <Status>DX=1.80086,DY=0.59944,D=1.898005</Status>
      </StatusFrame>
      <Foot />
    </Page>
  );
}
